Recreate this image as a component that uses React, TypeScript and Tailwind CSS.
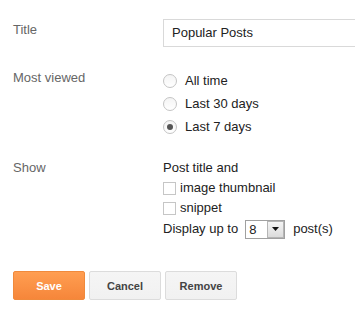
import React from "react";

function Radio({ checked, label }: { checked?: boolean; label: string }) {
  return (
    <div className="flex h-[23px] items-center">
      <span className="flex h-[14px] w-[14px] items-center justify-center rounded-full border border-[#c4c4c4] bg-gradient-to-b from-[#f4f4f4] to-white">
        {checked && <span className="h-[6px] w-[6px] rounded-full bg-[#555]" />}
      </span>
      <span className="ml-[8px]">{label}</span>
    </div>
  );
}

function Check({ label }: { label: string }) {
  return (
    <div className="flex h-[20px] items-center">
      <span className="h-[13px] w-[13px] border border-[#c6c6c6] bg-white" />
      <span className="ml-[4px]">{label}</span>
    </div>
  );
}

export default function App() {
  return (
    <div
      className="h-[319px] w-[355px] overflow-hidden bg-white pl-[13px] pt-[19px] text-[13px] leading-[16px] text-[#222]"
      style={{ fontFamily: '"Liberation Sans", Arial, sans-serif' }}
    >
      <div className="flex">
        <div className="w-[150px] shrink-0 pt-[3px] text-[#666]">Title</div>
        <div className="flex h-[28px] w-[210px] shrink-0 items-center border border-[#d9d9d9] pl-[8px]">
          Popular Posts
        </div>
      </div>

      <div className="mt-[22px] flex">
        <div className="w-[150px] shrink-0 pt-[1px] text-[#666]">Most viewed</div>
        <div className="flex flex-col">
          <Radio label="All time" />
          <Radio label="Last 30 days" />
          <Radio checked label="Last 7 days" />
        </div>
      </div>

      <div className="mt-[20px] flex">
        <div className="w-[150px] shrink-0 pt-[2px] leading-[16px] text-[#666]">Show</div>
        <div className="flex flex-col">
          <div className="leading-[20px]">Post title and</div>
          <Check label="image thumbnail" />
          <Check label="snippet" />
          <div className="flex h-[22px] items-center">
            <span>Display up to</span>
            <span className="ml-[7px] flex h-[19px] w-[40px] border border-[#a0a0a0] bg-white">
              <span className="flex-1 pl-[3px] leading-[17px]">8</span>
              <span className="flex w-[17px] items-center justify-center border border-[#b5b5b5] bg-gradient-to-b from-[#f4f4f4] to-[#dcdcdc]">
                <svg width="7" height="4" viewBox="0 0 7 4">
                  <path d="M0 0H7L3.5 4Z" fill="#111" />
                </svg>
              </span>
            </span>
            <span className="ml-[8px]">post(s)</span>
          </div>
        </div>
      </div>

      <div className="mt-[31px] flex gap-[4px] text-[11px] font-bold">
        <button className="flex h-[29px] w-[72px] items-center justify-center rounded-[2px] border border-[#f08a3c] bg-gradient-to-b from-[#ff9e51] to-[#f6863a] text-white">
          Save
        </button>
        <button className="flex h-[29px] w-[72px] items-center justify-center rounded-[2px] border border-[#dcdcdc] bg-gradient-to-b from-[#f5f5f5] to-[#f1f1f1] text-[#444]">
          Cancel
        </button>
        <button className="flex h-[29px] w-[72px] items-center justify-center rounded-[2px] border border-[#dcdcdc] bg-gradient-to-b from-[#f5f5f5] to-[#f1f1f1] text-[#444]">
          Remove
        </button>
      </div>
    </div>
  );
}
